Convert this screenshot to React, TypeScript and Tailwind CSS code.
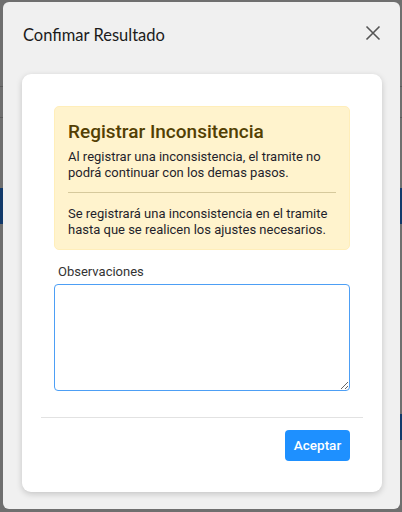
import React from "react";

export default function App() {
  return (
    <div className="relative w-[402px] h-[512px] overflow-hidden bg-[#6f6f6f]">
      {/* dimmed underlying page */}
      <div className="flex flex-col w-full h-full">
        <div className="h-[86px]" />
        <div className="h-[1px] bg-[#5a5a5a]" />
        <div className="h-[30px]" />
        <div className="h-[1px] bg-[#5a5a5a]" />
        <div className="h-[70px]" />
        <div className="h-[36px] bg-[#123a6b]" />
        <div className="h-[190px]" />
        <div className="flex justify-end">
          <div className="w-[6px] h-[26px] bg-[#123a6b]" />
        </div>
      </div>

      {/* modal overlay */}
      <div
        className="absolute left-[3px] top-[2px] w-[397px] h-[507px] rounded-[6px] bg-[#f0f0f0] flex flex-col"
        style={{ fontFamily: "Roboto, 'Noto Sans', sans-serif" }}
      >
        <div className="h-[66px] flex items-center justify-between pl-[20px] pr-[20px]">
          <span
            className="text-[16.5px] text-[#1b1b1b]"
            style={{ fontFamily: "Lato, 'Noto Sans', sans-serif" }}
          >
            Confimar Resultado
          </span>
          <svg width="16" height="16" viewBox="0 0 16 16" className="mr-[-1px] mb-[4px]">
            <path d="M1.5 1.5 L14.5 14.5 M14.5 1.5 L1.5 14.5" stroke="#555" strokeWidth="1.6" fill="none" />
          </svg>
        </div>

        <div className="mt-[6px] ml-[19px] mr-[18px] bg-white rounded-[9px] shadow-[0_2px_6px_rgba(0,0,0,0.18)] px-[19px] pt-[32px] pb-[31px] flex flex-col">
          <div className="px-[13px] flex flex-col">
            <div className="bg-[#fff3cd] border border-[#ffeeba] rounded-[5px] px-[13px] pt-[13px] pb-[12px] flex flex-col">
              <div className="text-[19px] leading-[24px] font-medium text-[#533f03]">
                Registrar Inconsitencia
              </div>
              <p className="mt-[5px] text-[13px] leading-[15.5px] text-[#1f1f2b]">
                Al registrar una inconsistencia, el tramite no podrá continuar con los demas pasos.
              </p>
              <div className="mt-[12px] mb-[13px] h-[1px] bg-[#d6c99c]" />
              <p className="text-[13px] leading-[15.5px] text-[#1f1f2b]">
                Se registrará una inconsistencia en el tramite hasta que se realicen los ajustes necesarios.
              </p>
            </div>

            <label className="mt-[14px] ml-[4px] text-[13px] leading-[16px] text-[#333]">
              Observaciones
            </label>
            <textarea
              className="mt-[4px] h-[107px] w-full border border-[#4d9ff5] rounded-[4px] outline-none resize-y bg-white"
            />
          </div>

          <div className="mt-[26px] h-[1px] bg-[#e2e2e2]" />

          <div className="px-[13px] mt-[12px] flex justify-end">
            <button className="h-[31px] w-[65px] rounded-[4px] bg-[#1e90ff] text-white text-[13.5px] font-medium">
              Aceptar
            </button>
          </div>
        </div>
      </div>
    </div>
  );
}
